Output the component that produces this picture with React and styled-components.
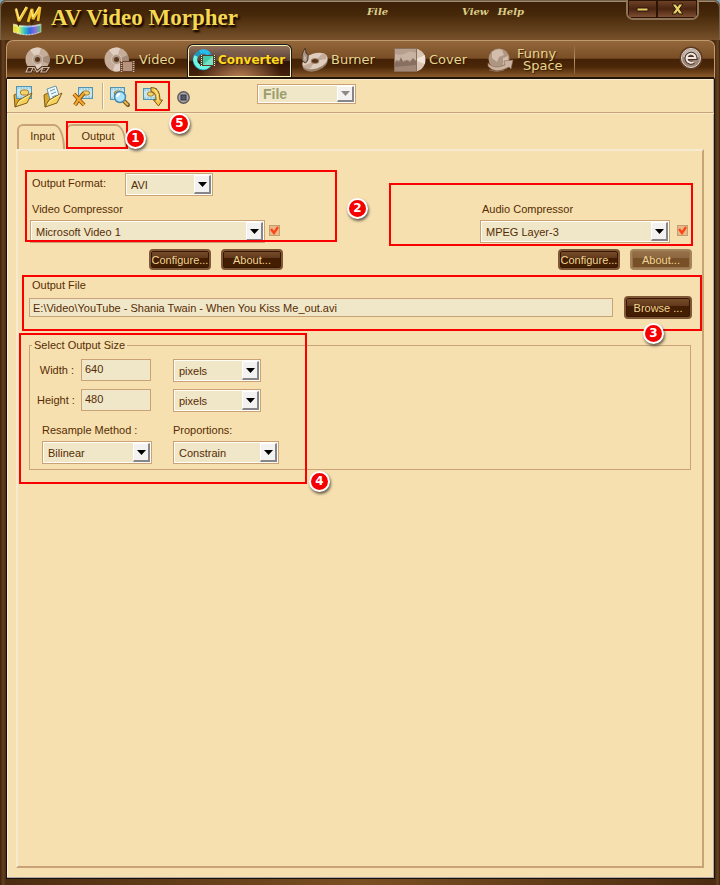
import { useState } from "react";
import styled, { createGlobalStyle } from "styled-components";

//SHARED VALUES
const cream = "#f7e0b0";
const fieldCream = "#f0e6c8";
const tan = "#c9a377";
const ink = "#562d02";
const gold = "#e6d690";
const uiFont = `"Liberation Sans", Arial, sans-serif`;

const GlobalStyle = createGlobalStyle`
  * {
    box-sizing: border-box;
  }

  body {
    margin: 0;
    background: #79a9c0;
    font: 11px/14px ${uiFont};
    color: ${ink};
  }

  button, input, select {
    font: inherit;
    color: inherit;
  }
`;


//WINDOW FRAME
const Window = styled.div`
  min-height: 100vh;
  display: flex;
  flex-direction: column;
  padding: 0 5px 6px 6px;
  border-radius: 6px 6px 0 0;
  background: linear-gradient(90deg, #3b210d 0, #65401d 3px, #4c2c10 6px, #7a4f22 50%, #4c2c10 calc(100% - 5px), #68431f calc(100% - 2px), #3b210d 100%);
`;

const TitleBar = styled.header`
  position: relative;
  height: 40px;
  margin: 0 -5px 0 -6px;
  padding: 0 20px 0 12px;
  display: flex;
  align-items: flex-start;
  border: 1px solid #75624c;
  border-bottom: 0;
  border-radius: 6px 6px 0 0;
  box-shadow: inset 0 1px #a58b6b;
  background: linear-gradient(#3b1f07, #462809 35%, #77512b);

  & > svg {
    margin-top: 4px;
  }
`;

const AppTitle = styled.h1`
  width: 316px;
  margin: 3px 0 0 8px;
  font: bold 23px/28px "Liberation Serif", "Times New Roman", serif;
  color: #f5d851;
  text-shadow: 1px 2px 2px #1d0c00, 2px 2px 2px #1d0c00;
`;

const Menu = styled.nav`
  flex: 1;
  display: flex;
  gap: 9px;
  padding-top: 4px;
`;

const MenuButton = styled.button`
  padding: 0;
  margin-right: ${props => props.$spaceAfter || 0}px;
  border: 0;
  background: none;
  color: #dccd8a;
  font: italic bold 10px/13px "DejaVu Serif", serif;
`;

const WindowButtons = styled.div`
  display: flex;
  height: 20px;
  margin-top: -1px;
  border: 2px solid #8f7357;
  border-top: 0;
  border-radius: 0 0 7px 7px;
  background: #2c1404;
  overflow: hidden;
`;

const WindowButton = styled.button`
  width: ${props => props.$wide ? 40 : 29}px;
  padding: 0;
  border: 1px solid #2c1404;
  background: linear-gradient(#6d4126, #4b2511 50%, #7e4f32);
  display: grid;
  place-items: center;
`;


//SECTION BAR
const SectionBar = styled.nav`
  height: 39px;
  display: flex;
  align-items: stretch;
  padding: 0 11px 0 9px;
  border: 1px solid #c09b6d;
  border-bottom: 2px solid #24150b;
  border-radius: 7px 7px 0 0;
  background: linear-gradient(#94673a, #7a4e26 48%, #432105 50%, #4b2708 72%, #8a5a2b);
`;

const SectionButton = styled.button`
  width: ${props => props.$width}px;
  padding: 2px 0 0 9px;
  display: flex;
  align-items: center;
  gap: 3px;
  border: 0;
  background: none;
  color: ${gold};
  font: 13px/12px "DejaVu Sans", Verdana, sans-serif;
  text-align: left;
  text-shadow: 1px 1px 1px #3a1c04;
  white-space: nowrap;

  & svg {
    flex: none;
  }

  & .secondLine {
    display: block;
    padding-left: 6px;
  }

  &.active {
    margin-top: 3px;
    padding: 0 0 2px 4px;
    gap: 1px;
    border: 1px solid #16191d;
    border-bottom: 0;
    border-radius: 6px 6px 0 0;
    box-shadow: inset 0 0 0 1px #fbf3b0;
    background: radial-gradient(ellipse at 50% 115%, #c58a5e, transparent 60%), linear-gradient(#94735c, #574039 48%, #2d1207 52%, #4a240d);
    color: #ffd91f;
    font-size: 12px;
    font-weight: bold;
  }
`;

const BarDivider = styled.div`
  width: 1px;
  margin: 3px 0;
  background: linear-gradient(#8c6239, #b89267, #8c6239);
`;

const HomeButton = styled.button`
  margin: 0 0 3px auto;
  padding: 0;
  border: 0;
  background: none;
  display: flex;
  align-items: center;
`;


//CONTENT
const Content = styled.main`
  flex: 1;
  display: flex;
  flex-direction: column;
  border: 1px solid #17110d;
  border-top: 0;
  background: ${cream};
  box-shadow: inset -1px -1px #b3a8a5, inset 1px 1px #fff0d5;
`;

const Toolbar = styled.div`
  height: 34px;
  display: flex;
  align-items: center;
  padding: 1px 0 0 1px;
  border-bottom: 1px solid ${tan};
  box-shadow: 0 1px #fbecc9;
`;

const ToolButton = styled.button`
  position: relative;
  width: ${props => props.$width || 30}px;
  height: 30px;
  padding: 2px 0 0;
  border: 0;
  background: none;
  display: grid;
  place-items: center;
`;

const ToolDivider = styled.div`
  width: 2px;
  height: 26px;
  margin: 0 1px 0 4px;
  background: #fdf6e4;
  border-left: 1px solid #c5ad86;
`;

const FileSlot = styled.div`
  margin: 0 0 4px 61px;
`;

const TabList = styled.div`
  display: flex;
  gap: 1px;
  height: 25px;
  margin: 11px 0 0 10px;
`;

const Tab = styled.button`
  position: relative;
  width: ${props => props.$width}px;
  padding: 0 0 4px 3px;
  border: 2px solid ${tan};
  border-bottom: 0;
  border-radius: 6px 11px 0 0 / 6px 25px 0 0;
  background: ${cream};
  text-align: center;
`;

const Panel = styled.section`
  flex: 1;
  margin: 0 10px 10px 9px;
  border: 2px solid ${tan};
  border-top-color: #f6ead2;
  border-left-color: #f6ead2;
`;


//CALLOUTS, drawn over the part they point at
const Callout = styled.div`
  position: absolute;
  z-index: 2;
  top: 0;
  left: 0;
  width: ${props => props.$width};
  height: ${props => props.$height};
  border: 2px solid #fb0000;
  pointer-events: none;
`;

const OutputCallout = styled(Callout)`
  top: -5px;
  left: -2px;
`;

const CalloutNumber = styled.span`
  position: absolute;
  z-index: 3;
  top: ${props => props.$top};
  left: ${props => props.$left};
  width: 21px;
  height: 21px;
  border: 2px solid white;
  border-radius: 50%;
  background: #f60000;
  box-shadow: 1px 2px 3px #0009;
  color: white;
  font: bold 12px/17px "DejaVu Sans", sans-serif;
  text-align: center;
`;


//FORM PARTS
const SelectFrame = styled.span`
  display: grid;
  width: ${props => props.$width}px;
  height: ${props => props.$short ? 20 : 23}px;
  border: 1px solid ${tan};
  background: ${fieldCream};
  box-shadow: inset 0 0 0 1px #fffdf6;

  & select {
    grid-area: 1 / 1;
    width: 100%;
    min-width: 0;
    padding: 0 20px 0 5px;
    border: 0;
    appearance: none;
    background: none;
    opacity: 1;
  }

  & select:disabled {
    color: #9b9e6c;
    font: bold 14px/16px ${uiFont};
  }
`;

const SelectArrow = styled.span`
  grid-area: 1 / 1;
  justify-self: end;
  width: 17px;
  margin: 1px;
  display: grid;
  place-items: center;
  border: 1px solid white;
  border-right: 2px solid #85858a;
  border-bottom: 2px solid #85858a;
  background: #f3f2f0;
  pointer-events: none;
`;

const TextField = styled.input`
  width: ${props => props.$width ? props.$width + "px" : "auto"};
  flex: ${props => props.$width ? "none" : "1"};
  min-width: 0;
  height: ${props => props.$width ? 22 : 19}px;
  padding: ${props => props.$width ? "0 3px 2px" : "0 3px"};
  border: 1px solid ${tan};
  border-radius: 0;
  background: ${fieldCream};
`;

const Check = styled.span`
  display: grid;
  width: 11px;
  height: 11px;
  border: 1px solid #c59d72;
  background: #e6bb89;

  & input {
    grid-area: 1 / 1;
    margin: 0;
    width: 9px;
    height: 9px;
    opacity: 0;
  }

  & svg {
    grid-area: 1 / 1;
    pointer-events: none;
    overflow: visible;
  }
`;

const PushButton = styled.button`
  width: ${props => props.$width || 62}px;
  height: ${props => props.$tall ? 23 : 21}px;
  padding: 0;
  border: 2px solid ${props => props.$faded ? "#a3835c" : "#805735"};
  border-radius: 4px;
  box-shadow: inset 0 0 0 1px ${props => props.$faded ? "#967149" : "#371603"};
  background: ${props => props.$faded
    ? "linear-gradient(#967049, #8d673f 40%, #785027 42%, #785027)"
    : "linear-gradient(#79502b, #62391b 40%, #431e02 42%, #431e02)"};
  color: #f0d695;
  text-align: center;
`;


//FORM LAYOUT
const Compressors = styled.div`
  display: flex;
  justify-content: space-between;
  padding: 19px 9px 0 7px;
`;

const CompressorColumn = styled.div`
  position: relative;
  display: flex;
  flex-direction: column;
  width: ${props => props.$audio ? 304 : 312}px;
  margin-top: ${props => props.$audio ? 13 : 0}px;
  padding: ${props => props.$audio ? "19px 0 0 91px" : "3px 0 0 5px"};

  & > label {
    margin: 0 2px 4px;
  }
`;

const FormatRow = styled.div`
  display: flex;
  margin-bottom: 6px;

  & label {
    width: 95px;
    padding: 3px 0 0 2px;
  }
`;

const CompressorRow = styled.div`
  display: flex;
  gap: ${props => props.$audio ? 7 : 4}px;

  & > :last-child {
    margin-top: 5px;
  }
`;

const ButtonRow = styled.div`
  display: flex;
  gap: 10px;
  margin-top: 6px;
  padding-left: ${props => props.$audio ? 0 : 119}px;
  align-self: ${props => props.$audio ? "flex-end" : "flex-start"};
  padding-right: ${props => props.$audio ? 1 : 0}px;
`;

const OutputFile = styled.div`
  position: relative;
  height: 56px;
  margin: 5px 0 0 4px;
  padding: 3px 10px 0 7px;

  & label {
    display: block;
    padding-left: 3px;
    margin-bottom: 4px;
  }
`;

const FileRow = styled.div`
  display: flex;
  align-items: center;
  gap: 11px;
`;

const OutputSize = styled.div`
  position: relative;
  margin: 2px 0 0 1px;
  padding: 5px 11px 14px 10px;
`;

const SizeFieldset = styled.fieldset`
  min-width: 0;
  margin: 0;
  padding: 7px 7px 5px;
  border: 1px solid ${tan};

  & legend {
    margin-left: -5px;
    padding: 0 2px;
  }
`;

const SizeRow = styled.div`
  display: flex;
  margin-bottom: 7px;

  & label {
    width: 44px;
    padding: 4px 7px 0 0;
    text-align: right;
    white-space: nowrap;
  }

  & input {
    margin-right: 22px;
  }
`;

const MethodRow = styled.div`
  display: flex;
  gap: 21px;
  padding: 4px 0 0 5px;

  & label {
    display: block;
    margin-bottom: 4px;
  }
`;


//ICONS
const Logo = () => (
  <svg width="30" height="32" viewBox="0 0 30 32" aria-hidden="true">
    <defs>
      <linearGradient id="rainbow">
        <stop offset="0" stopColor="#e4d92c" />
        <stop offset=".2" stopColor="#e9ed5b" />
        <stop offset=".4" stopColor="#31c7c4" />
        <stop offset=".6" stopColor="#3169e0" />
        <stop offset=".8" stopColor="#8b6fdc" />
        <stop offset="1" stopColor="#52cb71" />
      </linearGradient>
    </defs>
    <path d="M0 19Q14 23 28 19V27Q14 33 0 27Z" fill="url(#rainbow)" stroke="#ded4cc" strokeWidth=".6" />
    <path d="M1 20Q14 24 27 20" fill="none" stroke="#fff" opacity=".6" />
    <path d="M1 27Q14 32 27 27" fill="none" stroke="#fff" strokeDasharray="1 2" opacity=".7" />
    <path d="M3 4L6 16L14 2M15 17L19 4L20 14L27 2L25 16" fill="none" stroke="#432103" strokeWidth="4.5" />
    <path d="M3 4L6 16L14 2M15 17L19 4L20 14L27 2L25 16" fill="none" stroke="#f0c22c" strokeWidth="2.8" strokeLinejoin="bevel" />
    <path d="M3 3L6 14L13 2M18 5L20 12L26 2" fill="none" stroke="#fff39d" />
  </svg>
);

function Disc({ dvd }) {
  return (
    <svg width={dvd ? 27 : 32} height="27" viewBox={dvd ? "0 0 27 27" : "0 0 32 27"} aria-hidden="true">
      <circle cx="12.5" cy="12.5" r="12" fill="#c5ad9a" />
      <path d="M12.5 12.5L5 3A12 12 0 0 1 16 1ZM12.5 12.5L20 22A12 12 0 0 1 9 24Z" fill="#e0cfc0" />
      <path d="M12.5 12.5L24 8A12 12 0 0 1 24 17Z" fill="#a48c79" />
      <circle cx="12.5" cy="12.5" r="5" fill="#ad9684" stroke="#d9c6b5" />
      <circle cx="12.5" cy="12.5" r="2.5" fill="#5b351a" />
      {dvd ? (
        <g fill="none" stroke="#4b2a12" strokeWidth="3">
          <path d="M3 20.5H8L6 25H1ZM9 20L12 25L18 20M18 20.5H24L21 25H16Z" />
          <path d="M3 20.5H8L6 25H1ZM9 20L12 25L18 20M18 20.5H24L21 25H16Z" stroke="#cdb8a7" strokeWidth="1.2" />
        </g>
      ) : (
        <g>
          <rect x="16" y="14" width="15" height="11" fill="#6b4530" />
          <rect x="19" y="15" width="9" height="9" fill="#b5937d" />
          <path d="M17.5 14V25M29.5 14V25" stroke="#cdb8a2" strokeDasharray="1 1" strokeWidth="1.5" />
        </g>
      )}
    </svg>
  );
}

const ConvertIcon = () => (
  <svg width="25" height="24" viewBox="0 0 25 24" aria-hidden="true">
    <circle cx="11" cy="12" r="8" fill="none" stroke="#2395bb" strokeWidth="4.5" />
    <path d="M17 17A8 8 0 0 1 4 8" fill="none" stroke="#6df5df" strokeWidth="4" />
    <path d="M8 4A8 8 0 0 1 17 6" fill="none" stroke="#28bbee" strokeWidth="4" />
    <rect x="8" y="7" width="16" height="11" fill="#5a3c28" />
    <path d="M11 8H21V17H11Z" fill="#42cba6" />
    <path d="M11 17L21 8V17Z" fill="#77e3c5" />
    <path d="M9.5 7V18M22.5 7V18" stroke="#dcf3ce" strokeDasharray="1 1" />
  </svg>
);

const BurnerIcon = () => (
  <svg width="27" height="25" viewBox="0 0 27 25" aria-hidden="true">
    <ellipse cx="14" cy="15" rx="13" ry="8" fill="#9b8068" transform="rotate(-18 14 15)" />
    <ellipse cx="14" cy="13" rx="13" ry="7.5" fill="#decdbe" transform="rotate(-18 14 13)" />
    <path d="M14 13L22 5Q27 7 25 11ZM14 13L2 18Q5 22 9 21Z" fill="#c3ac9b" />
    <ellipse cx="14" cy="13" rx="4" ry="2.5" fill="#5b3417" stroke="#a78c76" />
    <path d="M4 0Q0 6 1 12Q5 18 7 11Q8 7 5 5Q5 2 4 0Z" fill="#a69586" stroke="#543521" />
    <path d="M4 7Q2 10 4 13Q6 11 4 7Z" fill="#c8b8a8" />
  </svg>
);

const CoverIcon = () => (
  <svg width="32" height="25" viewBox="0 0 32 25" aria-hidden="true">
    <circle cx="20" cy="12" r="11.5" fill="#d9c5b5" />
    <path d="M20 12L31 7V16Z" fill="#f0e2d7" />
    <rect x=".5" y=".5" width="22" height="23" fill="#b69f8e" stroke="#8b6e59" />
    <path d="M1 6Q8 8 12 5T22 5V12H1Z" fill="#c8b3a3" />
    <path d="M1 15L3 12L5 14L7 9L9 14L13 12L16 14L19 10L22 13V23H1Z" fill="#877060" />
    <path d="M1 19L22 17V23H1Z" fill="#a18775" />
  </svg>
);

const GlobeIcon = () => (
  <svg width="27" height="25" viewBox="0 0 27 25" aria-hidden="true">
    <circle cx="12" cy="11" r="10.5" fill="#af9683" />
    <path d="M5 4Q10 0 15 2L17 7L12 9L10 14L5 10ZM16 10L21 8L21 15L16 17Z" fill="#d3bdac" />
    <path d="M1 15Q7 22 18 17L17 13L26 12L24 21L22 19Q8 27 1 18Z" fill="#cbb4a1" stroke="#8a6a50" strokeWidth=".6" />
    <path d="M2 22Q10 25 17 22" fill="none" stroke="#8d6f58" />
  </svg>
);

const HomeIcon = () => (
  <svg width="24" height="24" viewBox="0 0 24 24" aria-hidden="true">
    <circle cx="12" cy="12" r="11.5" fill="#5e3b22" />
    <circle cx="12" cy="12" r="9.5" fill="#9d8778" stroke="#e3d8d0" />
    <path d="M4 11A8 8 0 0 1 20 11Q12 14 4 11Z" fill="#c6b9af" />
    <path d="M7 12H16.5A4.5 4.5 0 1 0 14.5 16" fill="none" stroke="#493022" strokeWidth="4" />
    <path d="M7 12H16.5A4.5 4.5 0 1 0 14.5 16" fill="none" stroke="#f1e7df" strokeWidth="2" />
  </svg>
);

const FilmStrip = ({ x, y, w, h }) => (
  <g transform={`translate(${x} ${y})`}>
    <rect width={w} height={h} fill="#c4e6ee" stroke="#5394b5" />
    <path d={`M1 1.5H${w}M1 ${h - 1.5}H${w}`} stroke="#4690b7" strokeDasharray="1 2" />
    <rect x="4" y="3.5" width={w - 7} height={h - 7} rx="2" fill="#f3d36e" stroke="#ad7b27" />
  </g>
);

function FolderIcon({ page }) {
  return (
    <svg width="22" height="24" viewBox="0 0 22 24" aria-hidden="true">
      <path d="M2 10L6 8L8 9V18L3 22Z" fill="#d9a72c" stroke="#7f5b1b" />
      {page ? (
        <g>
          <path d="M5 4L14 1L18 13L9 18Z" fill="#edf9fa" stroke="#6895aa" />
          <path d="M8 6L13 4M9 9L14 7M10 12L15 10" stroke="#6699b8" />
        </g>
      ) : <FilmStrip x={4.5} y={1.5} w={15} h={12} />}
      <path d="M3 22L7 15L20 8L15 18Z" fill="#f5d158" stroke="#805c1d" strokeLinejoin="round" />
      <path d="M5 20L8 16L18 10" fill="none" stroke="#fff0a0" />
    </svg>
  );
}

const RemoveIcon = () => (
  <svg width="22" height="24" viewBox="0 0 22 24" aria-hidden="true">
    <FilmStrip x={6.5} y={2.5} w={14} h={11} />
    <path d="M2 9L12 20M12 8Q7 13 3 20" fill="none" stroke="#854b0d" strokeWidth="4" />
    <path d="M2 9L12 20M12 8Q7 13 3 20" fill="none" stroke="#f4a72a" strokeWidth="2.4" />
  </svg>
);

const PreviewIcon = () => (
  <svg width="22" height="24" viewBox="0 0 22 24" aria-hidden="true">
    <FilmStrip x={1.5} y={2.5} w={14} h={12} />
    <path d="M15 16L19 20" stroke="#79531e" strokeWidth="4" strokeLinecap="round" />
    <path d="M15 16L19 20" stroke="#e9b94b" strokeWidth="2" />
    <circle cx="11" cy="12" r="5.5" fill="#abe4fb" stroke="#4a87aa" strokeWidth="1.5" />
    <path d="M8 12Q8 9 11 9" fill="none" stroke="#fff" strokeWidth="2" />
  </svg>
);

const ConvertToolIcon = () => (
  <svg width="22" height="24" viewBox="0 0 22 24" aria-hidden="true">
    <FilmStrip x={1.5} y={3.5} w={13} h={11} />
    <path d="M9 2.5Q18 2 18 15H20.5L16.5 21L11.5 15H14Q14 7 9 6.5Z" fill="#f6c74c" stroke="#835612" strokeLinejoin="round" />
    <path d="M12 4.5Q16 7 16 16" fill="none" stroke="#fff1a2" />
  </svg>
);

const StopIcon = () => (
  <svg width="13" height="13" viewBox="0 0 13 13" aria-hidden="true">
    <circle cx="6.5" cy="6.5" r="5.7" fill="#aaa" stroke="#5f5a59" strokeWidth="1.4" />
    <rect x="4" y="4" width="5" height="5" fill="#585868" stroke="#353442" />
  </svg>
);


//SMALL COMPONENTS
function Picker({ id, label, width, short, disabled, options }) {
  return (
    <SelectFrame $width={width} $short={short}>
      <select id={id} aria-label={label} disabled={disabled}>
        {options.map(option => <option key={option}>{option}</option>)}
      </select>
      <SelectArrow>
        <svg width="9" height="5" aria-hidden="true">
          <path d="M0 0H9L4.5 5Z" fill={disabled ? "#8b8b84" : "black"} />
        </svg>
      </SelectArrow>
    </SelectFrame>
  );
}

function CheckBox({ label }) {
  const [checked, setChecked] = useState(true);

  return (
    <Check>
      <input type="checkbox" aria-label={label} checked={checked} onChange={e => setChecked(e.target.checked)} />
      {checked && (
        <svg width="9" height="9" viewBox="0 0 9 9" aria-hidden="true">
          <path d="M1 3L4 7L8 1" fill="none" stroke="#ff4315" strokeWidth="2.3" />
        </svg>
      )}
    </Check>
  );
}

const sections = [
  { name: "DVD", width: 79, icon: <Disc dvd /> },
  { name: "Video", width: 92, icon: <Disc /> },
  { name: "Converter", width: 105, icon: <ConvertIcon />, active: true },
  { name: "Burner", width: 93, icon: <BurnerIcon /> },
  { name: "Cover", width: 93, icon: <CoverIcon /> },
  { name: "Funny", second: "Space", width: 96, icon: <GlobeIcon /> },
];

function App() {
  return (
    <>
      <GlobalStyle />
      <Window>
        <TitleBar>
          <Logo />
          <AppTitle>AV Video Morpher</AppTitle>
          <Menu>
            <MenuButton $spaceAfter={65}>File</MenuButton>
            <MenuButton>View</MenuButton>
            <MenuButton>Help</MenuButton>
          </Menu>
          <WindowButtons>
            <WindowButton aria-label="Minimize">
              <svg width="13" height="5"><path d="M1 1H12V4H1Z" fill="#e6ce68" stroke="#2d1606" /></svg>
            </WindowButton>
            <WindowButton $wide aria-label="Close">
              <svg width="13" height="12" viewBox="0 0 13 12">
                <path d="M1 1H5L6.5 3.5L8 1H12L8.5 6L12 11H8L6.5 8.5L5 11H1L4.5 6Z" fill="#e6ce68" stroke="#2d1606" />
              </svg>
            </WindowButton>
          </WindowButtons>
        </TitleBar>

        <SectionBar>
          {sections.map(section => (
            <SectionButton key={section.name} $width={section.width} className={section.active ? "active" : ""}>
              {section.icon}
              <span>
                {section.name}
                {section.second && <span className="secondLine">{section.second}</span>}
              </span>
            </SectionButton>
          ))}
          <BarDivider />
          <HomeButton aria-label="Home page"><HomeIcon /></HomeButton>
        </SectionBar>

        <Content>
          <Toolbar>
            <ToolButton aria-label="Open video"><FolderIcon /></ToolButton>
            <ToolButton aria-label="Open list"><FolderIcon page /></ToolButton>
            <ToolButton aria-label="Remove"><RemoveIcon /></ToolButton>
            <ToolDivider />
            <ToolButton aria-label="Preview"><PreviewIcon /></ToolButton>
            <ToolButton aria-label="Convert" $width={35}>
              <ConvertToolIcon />
              <Callout $width="35px" $height="30px" />
              <CalloutNumber $top="32px" $left="34px">5</CalloutNumber>
            </ToolButton>
            <ToolButton aria-label="Stop" $width={26}><StopIcon /></ToolButton>
            <FileSlot>
              <Picker label="Source" width={99} short disabled options={["File"]} />
            </FileSlot>
          </Toolbar>

          <TabList role="tablist">
            <Tab role="tab" aria-selected="false" $width={48}>Input</Tab>
            <Tab role="tab" aria-selected="true" $width={61}>
              Output
              <OutputCallout $width="62px" $height="28px" />
              <CalloutNumber $top="2px" $left="57px">1</CalloutNumber>
            </Tab>
          </TabList>

          <Panel role="tabpanel">
            <Compressors>
              <CompressorColumn>
                <FormatRow>
                  <label htmlFor="format">Output Format:</label>
                  <Picker id="format" width={88} options={["AVI"]} />
                </FormatRow>
                <label htmlFor="video">Video Compressor</label>
                <CompressorRow>
                  <Picker id="video" width={235} options={["Microsoft Video 1"]} />
                  <CheckBox label="Use video compressor" />
                </CompressorRow>
                <ButtonRow>
                  <PushButton>Configure...</PushButton>
                  <PushButton>About...</PushButton>
                </ButtonRow>
                <Callout $width="100%" $height="72px" />
                <CalloutNumber $top="28px" $left="322px">2</CalloutNumber>
              </CompressorColumn>

              <CompressorColumn $audio>
                <label htmlFor="audio">Audio Compressor</label>
                <CompressorRow $audio>
                  <Picker id="audio" width={190} options={["MPEG Layer-3"]} />
                  <CheckBox label="Use audio compressor" />
                </CompressorRow>
                <ButtonRow $audio>
                  <PushButton>Configure...</PushButton>
                  <PushButton $faded>About...</PushButton>
                </ButtonRow>
                <Callout $width="100%" $height="63px" />
              </CompressorColumn>
            </Compressors>

            <OutputFile>
              <label htmlFor="file">Output File</label>
              <FileRow>
                <TextField id="file" defaultValue="E:\Video\YouTube - Shania Twain - When You Kiss Me_out.avi" />
                <PushButton $width={68} $tall>Browse ...</PushButton>
              </FileRow>
              <Callout $width="100%" $height="56px" />
              <CalloutNumber $top="48px" $left="621px">3</CalloutNumber>
            </OutputFile>

            <OutputSize>
              <SizeFieldset>
                <legend>Select Output Size</legend>
                <SizeRow>
                  <label htmlFor="width">Width :</label>
                  <TextField id="width" $width={70} defaultValue="640" />
                  <Picker label="Width unit" width={88} options={["pixels"]} />
                </SizeRow>
                <SizeRow>
                  <label htmlFor="height">Height :</label>
                  <TextField id="height" $width={70} defaultValue="480" />
                  <Picker label="Height unit" width={88} options={["pixels"]} />
                </SizeRow>
                <MethodRow>
                  <div>
                    <label htmlFor="method">Resample Method :</label>
                    <Picker id="method" width={110} options={["Bilinear"]} />
                  </div>
                  <div>
                    <label htmlFor="proportions">Proportions:</label>
                    <Picker id="proportions" width={106} options={["Constrain"]} />
                  </div>
                </MethodRow>
              </SizeFieldset>
              <Callout $width="288px" $height="100%" />
              <CalloutNumber $top="138px" $left="290px">4</CalloutNumber>
            </OutputSize>
          </Panel>
        </Content>
      </Window>
    </>
  );
}

export default App;
